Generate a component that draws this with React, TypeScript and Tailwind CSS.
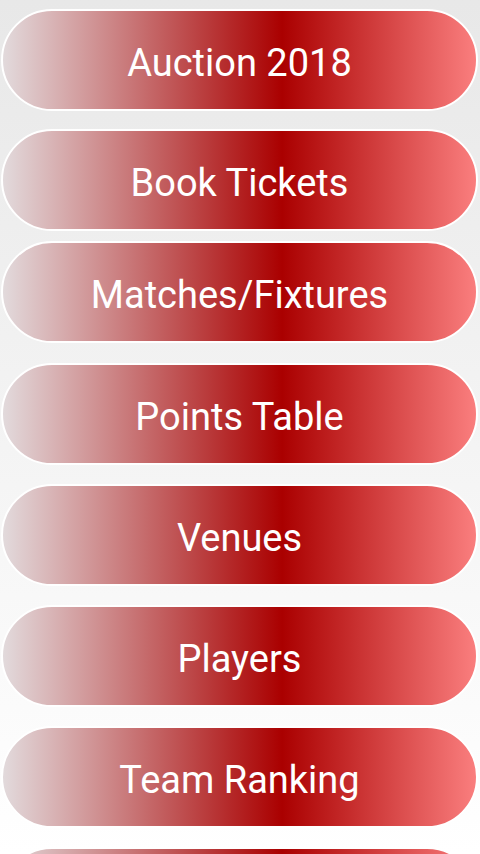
const menuItems = [
  { label: "Auction 2018", mt: "mt-[9px]" },
  { label: "Book Tickets", mt: "mt-[18px]" },
  { label: "Matches/Fixtures", mt: "mt-[10px]" },
  { label: "Points Table", mt: "mt-[20px]" },
  { label: "Venues", mt: "mt-[19px]" },
  { label: "Players", mt: "mt-[19px]" },
  { label: "Team Ranking", mt: "mt-[19px]" },
  // only the top edge of the last button is on screen
  { label: "", mt: "mt-[19px]" },
];

export default function App() {
  return (
    <div className="w-[480px] h-[854px] overflow-hidden bg-gradient-to-b from-[#e8e8e8] to-[#ffffff] font-['Roboto',sans-serif]">
      <div className="flex flex-col pl-[1px] pr-[2px]">
        {menuItems.map((item, i) => (
          <button
            key={i}
            className={`${item.mt} shrink-0 h-[102px] w-full rounded-full border-2 border-white bg-[linear-gradient(to_right,#e2dadc_0%,#aa0000_59%,#fa7e7e_100%)] text-white text-[38px] leading-none pt-[6px] flex items-center justify-center`}
          >
            {item.label}
          </button>
        ))}
      </div>
    </div>
  );
}
